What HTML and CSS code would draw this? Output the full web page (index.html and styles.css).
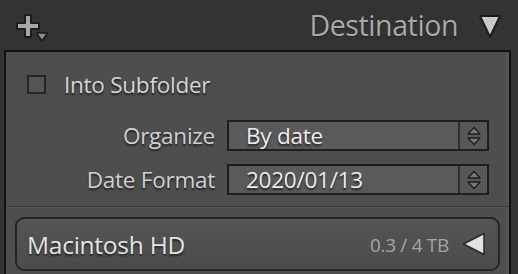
FILE: index.html
```html
<!DOCTYPE html>
<html>
<head>
<meta charset="utf-8">
<link rel="stylesheet" href="styles.css">
</head>
<body>
<div class="header">
  <svg class="add-icon" width="34" height="30" viewBox="0 0 34 30">
    <path d="M9 1 H15 V9 H23 V15 H15 V23 H9 V15 H1 V9 H9 Z" fill="#a7a7a7" stroke="#1c1c1c" stroke-width="2" stroke-linejoin="round"/>
    <path d="M20.5 19 H31.5 L26 27 Z" fill="#8c8c8c" stroke="#1c1c1c" stroke-width="1.5" stroke-linejoin="round"/>
  </svg>
  <div class="title">Destination</div>
  <svg class="collapse" width="24" height="25" viewBox="0 0 24 25">
    <path d="M2 2 H22 L12 23 Z" fill="#c9c9c9" stroke="#1a1a1a" stroke-width="2" stroke-linejoin="round"/>
  </svg>
</div>
<div class="panel">
  <div class="check-row">
    <span class="checkbox"></span>
    <span class="check-label">Into Subfolder</span>
  </div>
  <div class="form">
    <div class="label">Organize</div>
    <div class="select">
      <span class="value">By date</span>
      <span class="stepper">
        <svg width="14" height="20" viewBox="0 0 14 20"><path d="M1 8 L7 1.5 L13 8 Z M1 12 L7 18.5 L13 12 Z" fill="#7a7a7a" stroke="#1e1e1e" stroke-width="1.3" stroke-linejoin="round"/></svg>
      </span>
    </div>
    <div class="label">Date Format</div>
    <div class="select">
      <span class="value">2020/01/13</span>
      <span class="stepper">
        <svg width="14" height="20" viewBox="0 0 14 20"><path d="M1 8 L7 1.5 L13 8 Z M1 12 L7 18.5 L13 12 Z" fill="#7a7a7a" stroke="#1e1e1e" stroke-width="1.3" stroke-linejoin="round"/></svg>
      </span>
    </div>
  </div>
  <div class="separator"></div>
  <div class="volume">
    <span class="vol-name">Macintosh HD</span>
    <span class="vol-size">0.3 / 4 TB</span>
    <svg class="vol-arrow" width="24" height="24" viewBox="0 0 24 24"><path d="M22 1.5 V22.5 L1.5 12 Z" fill="#e2e2e2" stroke="#2a2a2a" stroke-width="1.5" stroke-linejoin="round"/></svg>
  </div>
</div>
</body>
</html>
```
FILE: styles.css
```css
* { box-sizing: border-box; }
html, body {
  margin: 0;
  padding: 0;
}
body {
  width: 518px;
  height: 274px;
  overflow: hidden;
  background: #333333;
  font-family: "Open Sans", "Noto Sans", sans-serif;
}
.header {
  height: 50px;
  display: flex;
  align-items: center;
  padding-left: 16px;
  padding-right: 16px;
}
.add-icon {
  margin-top: 8px;
}
.title {
  margin-left: auto;
  font-size: 28.5px;
  color: #a9a9a9;
  letter-spacing: -0.4px;
  margin-top: -1px;
  text-shadow: 0 1px 1px #1e1e1e;
}
.collapse {
  margin-left: 20px;
  margin-top: 2px;
}
.panel {
  margin-left: 4px;
  width: 507px;
  height: 224px;
  background: #4e4e4e;
  border: 2px solid #111111;
  border-bottom: none;
  box-shadow: inset -3px 0 0 #555555;
}
.check-row {
  display: flex;
  align-items: center;
  padding: 21px 0 0 21px;
  height: 43px;
}
.checkbox {
  width: 19px;
  height: 19px;
  border: 2px solid #262626;
  background: #555555;
}
.check-label {
  margin-left: 18px;
  font-size: 22.5px;
  color: #d4d4d4;
  letter-spacing: -0.25px;
  text-shadow: 0 2px 2px #222;
}
.form {
  display: grid;
  grid-template-columns: 209px 262px;
  column-gap: 12px;
  row-gap: 13px;
  align-items: center;
  margin-top: 25px;
}
.label {
  text-align: right;
  font-size: 22.5px;
  line-height: 27px;
  color: #d0d0d0;
  letter-spacing: -0.25px;
  text-shadow: 0 2px 2px #222;
}
.select {
  display: flex;
  height: 31px;
  border: 2px solid #1f1f1f;
  background: #5a5a5a;
}
.value {
  flex: 1;
  padding-left: 17px;
  font-size: 22.5px;
  line-height: 27px;
  color: #ececec;
  letter-spacing: -0.25px;
  text-shadow: 0 2px 2px #222;
}
.stepper {
  width: 29px;
  border-left: 2px solid #2e2e2e;
  display: flex;
  align-items: center;
  justify-content: center;
  background: #575757;
}
.separator {
  margin-top: 11px;
  height: 2px;
  border-top: 1px solid #383838;
  border-bottom: 1px solid #555555;
}
.volume {
  margin: 9px 0 0 9px;
  width: 485px;
  height: 54px;
  border: 2px solid #262626;
  border-radius: 9px;
  background: linear-gradient(#555555, #4b4b4b);
  display: flex;
  align-items: center;
  padding: 0 12px 0 10px;
}
.vol-name {
  font-size: 24.5px;
  color: #e4e4e4;
  letter-spacing: -0.25px;
  text-shadow: 0 2px 2px #222;
}
.vol-size {
  margin-left: auto;
  margin-top: 2px;
  font-size: 19px;
  color: #a5a5a5;
  letter-spacing: -0.3px;
}
.vol-arrow {
  margin-left: 13px;
}
```
